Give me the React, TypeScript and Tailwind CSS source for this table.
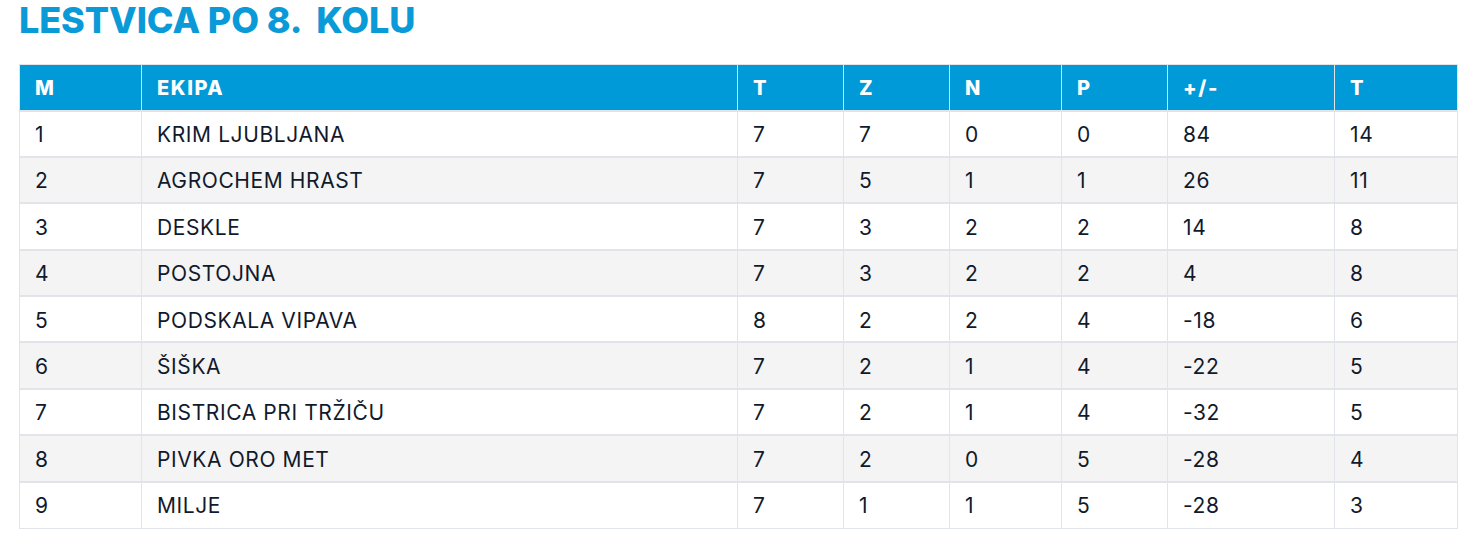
import React from 'react';

const rows = [
    ['1', 'KRIM LJUBLJANA', '7', '7', '0', '0', '84', '14'],
    ['2', 'AGROCHEM HRAST', '7', '5', '1', '1', '26', '11'],
    ['3', 'DESKLE', '7', '3', '2', '2', '14', '8'],
    ['4', 'POSTOJNA', '7', '3', '2', '2', '4', '8'],
    ['5', 'PODSKALA VIPAVA', '8', '2', '2', '4', '-18', '6'],
    ['6', 'ŠIŠKA', '7', '2', '1', '4', '-22', '5'],
    ['7', 'BISTRICA PRI TRŽIČU', '7', '2', '1', '4', '-32', '5'],
    ['8', 'PIVKA ORO MET', '7', '2', '0', '5', '-28', '4'],
    ['9', 'MILJE', '7', '1', '1', '5', '-28', '3'],
];

const heads = ['M', 'EKIPA', 'T', 'Z', 'N', 'P', '+/-', 'T'];
const widths = ['w-[122px]', 'w-[596px]', 'w-[106px]', 'w-[106px]', 'w-[112px]', 'w-[106px]', 'w-[167px]', 'w-[123px]'];

export default function App() {
    return (
        <div className="bg-white w-[1476px] h-[552px] px-[19px] pt-0 font-['Inter','Noto_Sans',sans-serif]">
            <h1 className="text-[#0a9ad7] text-[36px] font-extrabold leading-[41px] tracking-[-0.1px] whitespace-pre">LESTVICA PO 8.  KOLU</h1>
            <table className="mt-[23px] table-fixed border-collapse w-[1439px] border border-[#e1e5ea]">
                <colgroup>
                    {widths.map((w, i) => <col key={i} className={w} />)}
                </colgroup>
                <thead>
                    <tr className="bg-[#009ad8] h-[46px]">
                        {heads.map((h, i) => (
                            <th key={i} className="text-left text-white font-extrabold text-[20px] tracking-[1.6px] pl-[15px] pt-[2px] border-x border-[#e1e5ea]">{h}</th>
                        ))}
                    </tr>
                </thead>
                <tbody>
                    {rows.map((r, i) => (
                        <tr key={i} className={`h-[46.4px] border-t-2 border-[#e1e5ea] ${i % 2 === 1 ? 'bg-[#f4f4f4]' : 'bg-white'}`}>
                            {r.map((c, j) => (
                                <td key={j} className="text-left text-[#111a2c] text-[21px] tracking-[0.6px] pl-[15px] pt-[2px] border-x border-[#e1e5ea]">{c}</td>
                            ))}
                        </tr>
                    ))}
                </tbody>
            </table>
        </div>
    );
}
